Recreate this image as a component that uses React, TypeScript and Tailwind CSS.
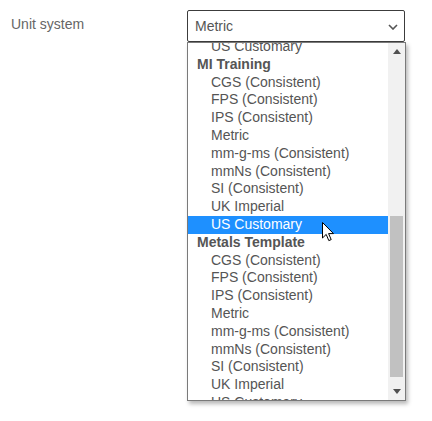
import React from "react";

type Row = { label: string; header?: boolean; selected?: boolean };

const units = [
  "CGS (Consistent)",
  "FPS (Consistent)",
  "IPS (Consistent)",
  "Metric",
  "mm-g-ms (Consistent)",
  "mmNs (Consistent)",
  "SI (Consistent)",
  "UK Imperial",
  "US Customary",
];

const rows: Row[] = [
  { label: "US Customary" },
  { label: "MI Training", header: true },
  ...units.map((u) => ({ label: u, selected: u === "US Customary" })),
  { label: "Metals Template", header: true },
  ...units.map((u) => ({ label: u })),
];

export default function App() {
  return (
    <div
      className="relative w-[432px] h-[421px] bg-white overflow-hidden"
      style={{ fontFamily: '"Liberation Sans", Arial, sans-serif' }}
    >
      <div className="flex items-start pt-[10px] pl-[11px]">
        <div className="w-[176px] pt-[5px] text-[14px] leading-[18px] text-[#666]">Unit system</div>
        <div className="w-[218px] h-[32px] border border-[#3c3c3c] rounded-[2px] flex items-center justify-between pl-[7px] pr-[6px] text-[14px] text-[#555]">
          <span>Metric</span>
          <svg width="10" height="6" viewBox="0 0 10 6" className="mt-[1px]">
            <path d="M1 1 L5 5 L9 1" fill="none" stroke="#555" strokeWidth="1.6" />
          </svg>
        </div>
      </div>

      {/* dropdown list */}
      <div className="absolute left-[187px] top-[42px] w-[219px] h-[359px] border border-[#7a7a7a] bg-white shadow-[2px_3px_4px_rgba(0,0,0,0.28)] flex">
        <div className="flex-1 overflow-hidden">
          <div className="-mt-[5px]">
            {rows.map((r, i) => (
              <div
                key={i}
                className={
                  "h-[17.8px] leading-[17.8px] text-[14px] whitespace-nowrap " +
                  (r.header
                    ? "pl-[9px] font-bold text-[#555]"
                    : r.selected
                    ? "pl-[23px] bg-[#1e90ff] text-white"
                    : "pl-[23px] text-[#555]")
                }
              >
                {r.label}
              </div>
            ))}
          </div>
        </div>
        <div className="w-[17px] bg-[#f1f1f1] flex flex-col items-center">
          <div className="h-[17px] w-full flex items-center justify-center">
            <svg width="8" height="5" viewBox="0 0 8 5">
              <path d="M0 5 L4 0 L8 5 Z" fill="#505050" />
            </svg>
          </div>
          <div className="flex-1 w-full flex flex-col px-[2px]">
            <div className="h-[156px]" />
            <div className="h-[161px] bg-[#c1c1c1]" />
          </div>
          <div className="h-[17px] w-full flex items-center justify-center">
            <svg width="8" height="5" viewBox="0 0 8 5">
              <path d="M0 0 L8 0 L4 5 Z" fill="#505050" />
            </svg>
          </div>
        </div>
      </div>

      {/* mouse cursor */}
      <svg
        className="absolute left-[322px] top-[222px]"
        width="14"
        height="21"
        viewBox="0 0 14 21"
      >
        <path
          d="M0.5 0.5 L0.5 16 L4.2 12.4 L6.8 18.6 L9.2 17.6 L6.6 11.6 L11.5 11.6 Z"
          fill="#fff"
          stroke="#000"
          strokeWidth="1"
          strokeLinejoin="miter"
        />
      </svg>
    </div>
  );
}
